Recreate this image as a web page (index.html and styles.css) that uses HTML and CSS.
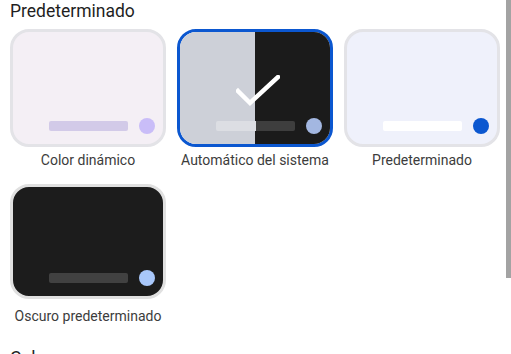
FILE: index.html
```html
<!DOCTYPE html>
<html lang="es">
<head>
<meta charset="utf-8">
<link rel="stylesheet" href="styles.css">
</head>
<body>
<div class="page">
  <h2 class="section-title">Predeterminado</h2>
  <div class="grid">
    <div class="option">
      <div class="card card-dynamic">
        <div class="preview-row"><span class="bar"></span><span class="dot"></span></div>
      </div>
      <div class="label">Color dinámico</div>
    </div>
    <div class="option">
      <div class="card card-auto selected">
        <div class="half half-light"></div>
        <div class="half half-dark"></div>
        <svg class="check" width="44" height="32" viewBox="0 0 44 32"><polyline points="2,16 14,28 42,2" fill="none" stroke="#fff" stroke-width="4.5" stroke-linecap="square"/></svg>
        <div class="preview-row"><span class="bar"></span><span class="dot"></span></div>
      </div>
      <div class="label">Automático del sistema</div>
    </div>
    <div class="option">
      <div class="card card-default">
        <div class="preview-row"><span class="bar"></span><span class="dot"></span></div>
      </div>
      <div class="label">Predeterminado</div>
    </div>
    <div class="option">
      <div class="card card-dark">
        <div class="preview-row"><span class="bar"></span><span class="dot"></span></div>
      </div>
      <div class="label label-dark">Oscuro predeterminado</div>
    </div>
  </div>
  <h2 class="section-title next">Colores</h2>
</div>
<div class="scrollbar"></div>
</body>
</html>
```
FILE: styles.css
```css
html, body {
  margin: 0;
  padding: 0;
  background: #ffffff;
  font-family: Roboto, "Noto Sans", sans-serif;
  color: #1f1f1f;
  overflow: hidden;
  height: 354px;
}
.page {
  padding: 1px 0 0 10px;
}
.section-title {
  margin: 0;
  font-size: 17.5px;
  font-weight: 400;
  line-height: 21px;
  color: #1f1f1f;
}
.section-title.next {
  margin-top: 23px;
}
.grid {
  margin-top: 7px;
  display: grid;
  grid-template-columns: repeat(3, 156px);
  column-gap: 11px;
  row-gap: 15px;
}
.option {
  display: flex;
  flex-direction: column;
  align-items: center;
}
.card {
  position: relative;
  box-sizing: border-box;
  width: 156px;
  height: 118px;
  border: 3px solid #e3e3e7;
  border-radius: 19px;
  overflow: hidden;
  display: flex;
  align-items: flex-end;
  justify-content: flex-end;
}
.preview-row {
  position: relative;
  display: flex;
  align-items: center;
  gap: 11px;
  padding: 0 8px 10px 0;
}
.bar {
  width: 79px;
  height: 10px;
  border-radius: 2px;
}
.dot {
  width: 16px;
  height: 16px;
  border-radius: 50%;
}
.card-dynamic { background: #f4eff5; }
.card-dynamic .bar { background: #d2cae8; }
.card-dynamic .dot { background: #c9bdf8; }

.card-auto {
  border-color: #0b57d0;
}
.half {
  position: absolute;
  top: 0;
  bottom: 0;
  width: 50%;
}
.half-light { left: 0; background: #cdd0d8; }
.half-dark { right: 0; background: #1b1b1b; }
.card-auto .bar { background: linear-gradient(to right, #dcdee3 0 50%, #3e3e3e 50% 100%); }
.card-auto .dot { background: #a3b7e1; }
.check {
  position: absolute;
  left: 56px;
  top: 43px;
}

.card-default { background: #eff1fb; }
.card-default .bar { background: #ffffff; }
.card-default .dot { background: #0b57d0; }

.card-dark { background: #1c1c1c; border-color: #e0e0e0; height: 115px; }
.card-dark .bar { background: #414141; }
.card-dark .dot { background: #a8c7fa; }

.label {
  margin-top: 4px;
  font-size: 14px;
  line-height: 18px;
  color: #3c3c3c;
  white-space: nowrap;
}
.label-dark {
  margin-top: 8px;
}
.scrollbar {
  position: absolute;
  top: 0;
  right: 0;
  width: 5px;
  height: 278px;
  background: #a3a3a3;
}
```
